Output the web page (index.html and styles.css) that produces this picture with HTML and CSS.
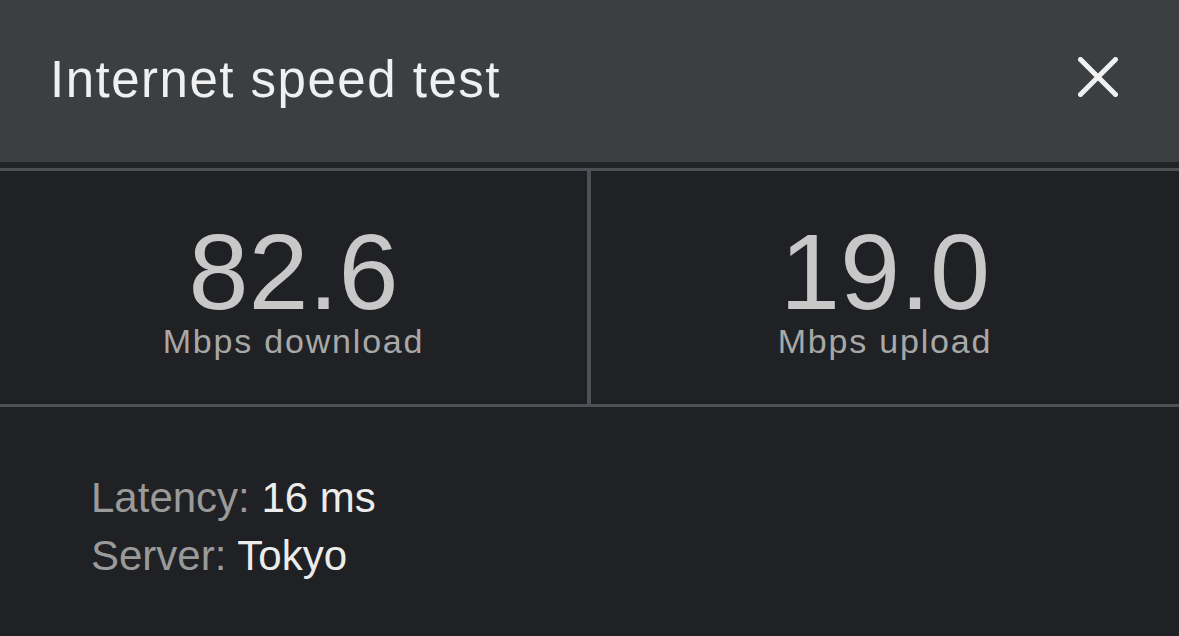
FILE: index.html
```html
<!DOCTYPE html>
<html lang="en">
<head>
  <meta charset="UTF-8" />
  <meta name="viewport" content="width=device-width, initial-scale=1.0" />
  <title>Internet speed test</title>
  <link rel="stylesheet" href="styles.css">
</head>
<body>
  <header class="top-bar">
    <h1>Internet speed test</h1>
    <button class="close-btn" aria-label="Close">
      <svg width="40" height="40" viewBox="0 0 40 40">
        <path d="M2.5 2.5 L37.5 37.5 M37.5 2.5 L2.5 37.5" stroke="#f2f2f2" stroke-width="5" stroke-linecap="round" />
      </svg>
    </button>
  </header>

  <main class="results">
    <section class="speeds">
      <div class="speed">
        <div class="speed-value">82.6</div>
        <div class="speed-label">Mbps download</div>
      </div>
      <div class="speed">
        <div class="speed-value">19.0</div>
        <div class="speed-label">Mbps upload</div>
      </div>
    </section>

    <section class="details">
      <p><span class="key">Latency:</span> 16 ms</p>
      <p><span class="key">Server:</span> Tokyo</p>
    </section>
  </main>
</body>
</html>
```

FILE: styles.css
```css
:root {
  --header-bg: #3c3f42;
  --panel-bg: #202124;
  --divider: #4d5054;
}

* {
  box-sizing: border-box;
}

html, body {
  height: 100%;
}

body {
  margin: 0;
  font-family: 'Liberation Sans', Arial, sans-serif;
  background: var(--panel-bg);
  color: #c6c6c6;
  overflow: hidden;
}

.top-bar {
  height: 168px;
  background: var(--header-bg);
  display: flex;
  align-items: center;
  justify-content: space-between;
  padding: 0 61px 0 50px;
  border-bottom: 6px solid #222326;
}

.top-bar h1 {
  margin: -3px 0 0;
  font-size: 51px;
  line-height: 62px;
  letter-spacing: 1.5px;
  font-weight: normal;
  color: #f0f0f0;
}

.close-btn {
  background: none;
  border: none;
  padding: 0;
  cursor: pointer;
  display: flex;
  margin-top: -9px;
}

.results {
  border-top: 3px solid var(--divider);
}

.speeds {
  display: grid;
  grid-template-columns: 587px 1fr;
  height: 236px;
  border-bottom: 3px solid var(--divider);
}

.speed {
  display: flex;
  flex-direction: column;
  align-items: center;
  padding-top: 51px;
}

.speed + .speed {
  border-left: 4px solid var(--divider);
}

.speed-value {
  font-size: 108px;
  line-height: 100px;
  color: #c8c8c8;
}

.speed-label {
  font-size: 34px;
  line-height: 1;
  letter-spacing: 1.8px;
  margin-top: 2px;
  color: #a8a8a8;
}

.details {
  padding: 62px 91px;
}

.details p {
  margin: 0;
  font-size: 42px;
  line-height: 58px;
  color: #ececec;
}

.details .key {
  color: #9a9a9a;
}
```
